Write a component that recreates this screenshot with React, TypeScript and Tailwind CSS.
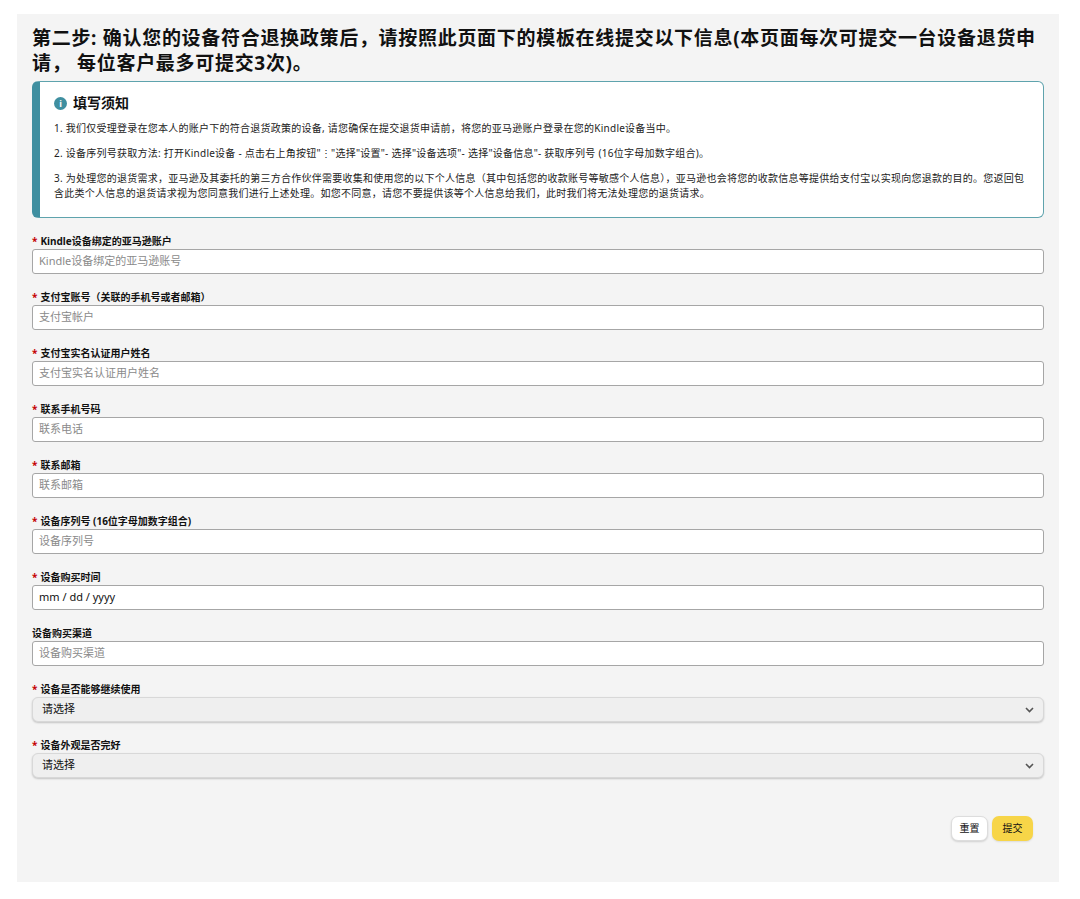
import React from "react";

const fields: { label: string; ph: string; req: boolean; type?: string }[] = [
  { label: "Kindle设备绑定的亚马逊账户", ph: "Kindle设备绑定的亚马逊账号", req: true },
  { label: "支付宝账号（关联的手机号或者邮箱）", ph: "支付宝帐户", req: true },
  { label: "支付宝实名认证用户姓名", ph: "支付宝实名认证用户姓名", req: true },
  { label: "联系手机号码", ph: "联系电话", req: true },
  { label: "联系邮箱", ph: "联系邮箱", req: true },
  { label: "设备序列号 (16位字母加数字组合)", ph: "设备序列号", req: true },
  { label: "设备购买时间", ph: "mm / dd / yyyy", req: true, type: "date" },
  { label: "设备购买渠道", ph: "设备购买渠道", req: false },
];

function Label({ text, req }: { text: string; req: boolean }) {
  return (
    <div className="text-[10px] font-bold text-[#111] leading-[14px] h-[14px]">
      {req && <span className="text-[#c40000] mr-[3px]">*</span>}
      {text}
    </div>
  );
}

export default function App() {
  return (
    <div className="bg-white w-[1080px] h-[899px] pt-[14px] pl-[17px]" style={{ fontFamily: '"Noto Sans", "Noto Sans CJK SC", sans-serif' }}>
      <div className="bg-[#f4f4f4] w-[1042px] h-[868px] px-[15px] pt-[12px]">
        <h1 className="text-[19px] font-bold leading-[25px] text-[#111] tracking-[0.7px]">
          第二步: 确认您的设备符合退换政策后，请按照此页面下的模板在线提交以下信息(本页面每次可提交一台设备退货申请， 每位客户最多可提交3次)。
        </h1>
        <div className="mt-[5px] bg-white border border-[#5fa3ad] border-l-[8px] border-l-[#3f8fa0] rounded-[6px] h-[137px] pl-[14px] pr-[14px] pt-[12px]">
          <div className="flex items-center gap-[6px] text-[14px] font-bold text-[#111] leading-[18px]">
            <span className="w-[13px] h-[13px] rounded-full bg-[#3f8fa0] text-white text-[9px] flex items-center justify-center leading-none">i</span>
            填写须知
          </div>
          <div className="text-[10px] text-[#222] leading-[15px] mt-[9px] space-y-[10px] tracking-[0.25px]">
            <p>1. 我们仅受理登录在您本人的账户下的符合退货政策的设备, 请您确保在提交退货申请前，将您的亚马逊账户登录在您的Kindle设备当中。</p>
            <p>2. 设备序列号获取方法: 打开Kindle设备 - 点击右上角按钮"⋮"选择"设置"- 选择"设备选项"- 选择"设备信息"- 获取序列号 (16位字母加数字组合)。</p>
            <p>3. 为处理您的退货需求，亚马逊及其委托的第三方合作伙伴需要收集和使用您的以下个人信息（其中包括您的收款账号等敏感个人信息），亚马逊也会将您的收款信息等提供给支付宝以实现向您退款的目的。您返回包含此类个人信息的退货请求视为您同意我们进行上述处理。如您不同意，请您不要提供该等个人信息给我们，此时我们将无法处理您的退货请求。</p>
          </div>
        </div>
        <div className="mt-[16px] flex flex-col gap-[16px]">
          {fields.map((f) => (
            <div key={f.label} className="flex flex-col gap-[1px]">
              <Label text={f.label} req={f.req} />
              <div className={`h-[25px] bg-white border border-[#a6a6a6] rounded-[3px] px-[6px] flex items-center text-[11px] ${f.type === "date" ? "text-[#111]" : "text-[#8a8a8a]"}`}>
                {f.ph}
              </div>
            </div>
          ))}
          {["设备是否能够继续使用", "设备外观是否完好"].map((l) => (
            <div key={l} className="flex flex-col gap-[1px]">
              <Label text={l} req={true} />
              <div className="h-[25px] bg-[#efefef] border border-[#d8d8d8] rounded-[6px] shadow-[0_1px_2px_rgba(0,0,0,0.2)] px-[9px] flex items-center justify-between text-[11px] text-[#111]">
                请选择
                <svg width="9" height="6" viewBox="0 0 9 6"><path d="M1 1l3.5 3.5L8 1" stroke="#555" strokeWidth="1.6" fill="none" /></svg>
              </div>
            </div>
          ))}
        </div>
        <div className="flex justify-end gap-[4px] mt-[38px] pr-[11px]">
          <button className="w-[37px] h-[25px] bg-white rounded-[7px] border border-[#ddd] shadow-[0_1px_2px_rgba(0,0,0,0.15)] text-[10px] text-[#111]">重置</button>
          <button className="w-[41px] h-[25px] bg-[#f7d548] rounded-[7px] shadow-[0_1px_2px_rgba(0,0,0,0.1)] text-[10px] text-[#111]">提交</button>
        </div>
      </div>
    </div>
  );
}
